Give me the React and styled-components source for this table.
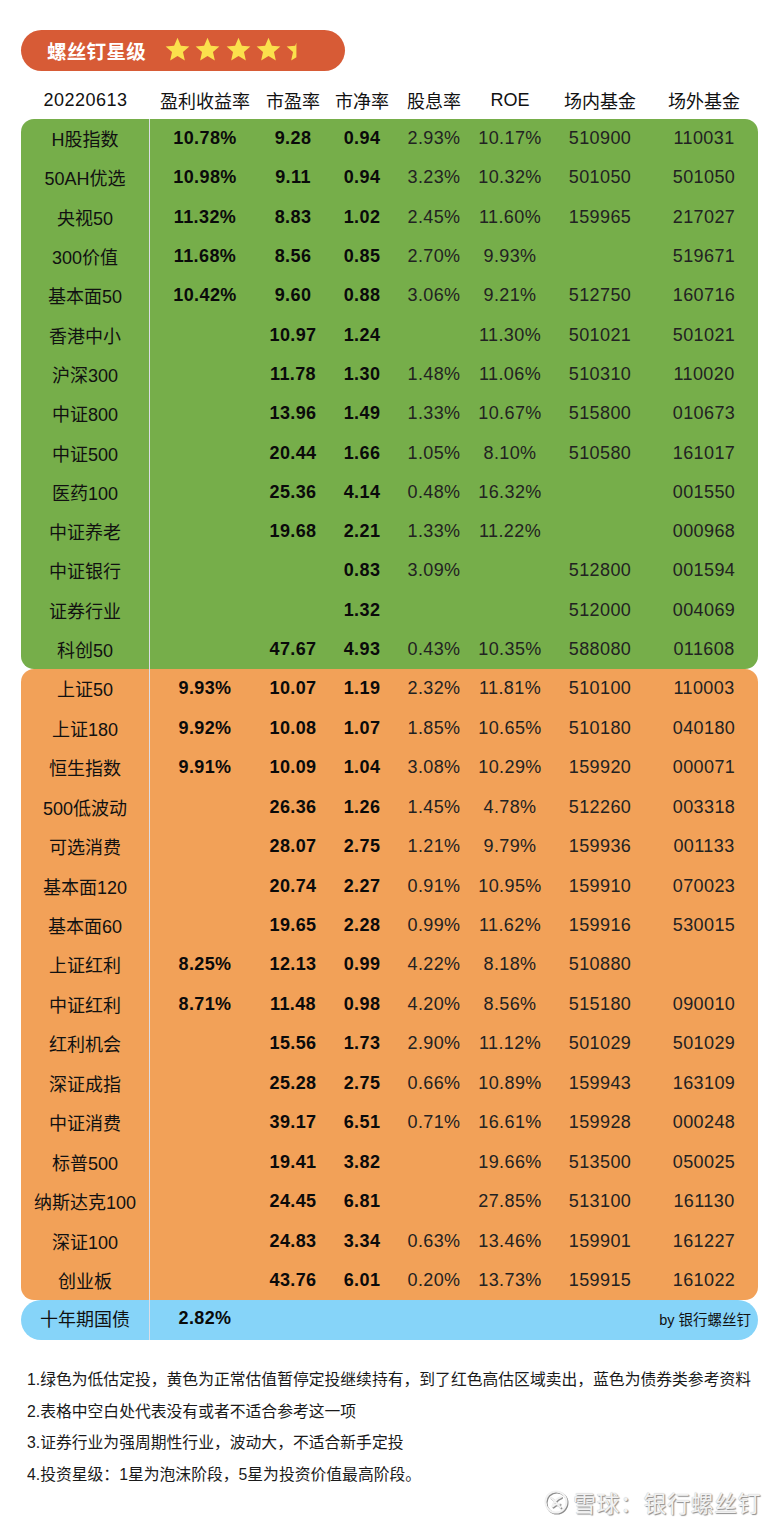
import React from "react";
import styled, { createGlobalStyle } from "styled-components";

const GlobalStyle = createGlobalStyle`
  html, body { margin: 0; padding: 0; background: #ffffff; }
  body {
    font-family: "Liberation Sans", "Noto Sans CJK SC", sans-serif;
    color: #111;
    -webkit-font-smoothing: antialiased;
  }
`;

const COLS = "129px 110px 66px 72px 72px 80px 100px 108px";

const Page = styled.div`
  position: relative;
  width: 784px;
  height: 1522px;
  box-sizing: border-box;
  padding: 30px 26px 0 21px;
  overflow: hidden;
`;

const Badge = styled.div`
  display: flex;
  align-items: center;
  width: 324px;
  height: 41px;
  box-sizing: border-box;
  padding-left: 26px;
  border-radius: 21px;
  background: #d75b36;
`;

const BadgeTitle = styled.span`
  font-family: "Noto Sans CJK SC", sans-serif;
  font-weight: 700;
  font-size: 19.5px;
  color: #ffffff;
  letter-spacing: 0.3px;
`;

const Stars = styled.div`
  display: flex;
  align-items: center;
  gap: 5.3px;
  margin-left: 19px;
  margin-top: -3px;
`;

const HeaderRow = styled.div`
  display: grid;
  grid-template-columns: ${COLS};
  height: 39px;
  margin-top: 9px;
  align-items: center;
  font-size: 18px;
  color: #111;
`;

const HeadCell = styled.div`
  text-align: center;
  white-space: nowrap;
  letter-spacing: ${(p) => (p.$num ? "0.5px" : "0")};
  padding-top: 1px;
`;

const Group = styled.div`
  background: ${(p) => p.$bg};
  border-radius: ${(p) => p.$radius || "13px"};
`;

const Row = styled.div`
  display: grid;
  grid-template-columns: ${COLS};
  height: ${(p) => p.$h}px;
  align-items: center;
`;

const NameCell = styled.div`
  height: 100%;
  display: flex;
  align-items: center;
  justify-content: center;
  border-right: 1px solid #dcdde6;
  font-size: 18px;
  color: #111;
  white-space: nowrap;
  padding-bottom: ${(p) => (p.$up ? "4px" : "1px")};
  box-sizing: border-box;
`;

const Cell = styled.div`
  text-align: center;
  font-size: 18px;
  white-space: nowrap;
  letter-spacing: 0.4px;
  font-weight: ${(p) => (p.$bold ? 700 : 400)};
  color: ${(p) => (p.$bold ? "#0a0a0a" : "#222")};
  padding-bottom: ${(p) => (p.$up ? "4px" : "0")};
`;

const ByCell = styled.div`
  grid-column: 3 / -1;
  text-align: right;
  padding-right: 7px;
  padding-bottom: 4px;
  font-size: 14.5px;
  color: #111;
`;

const Notes = styled.div`
  margin-top: 24px;
  padding-left: 6px;
  font-size: 15.8px;
  line-height: 31.5px;
  color: #1a1a1a;
`;

const NoteLine = styled.div`
  white-space: nowrap;
`;

const Watermark = styled.div`
  position: absolute;
  right: 23px;
  top: 1485px;
  display: flex;
  align-items: center;
  gap: 5px;
  font-size: 23px;
  color: #f2f2f2;
  text-shadow: 1px 1px 1px #8c8c8c, 0 0 1px #b5b5b5;
  font-family: "Noto Sans CJK SC", sans-serif;
`;

const WmText = styled.span`
  letter-spacing: 0.5px;
`;

const FULL_STAR =
  "12,0.8 15.24,8.33 23.41,9.09 17.25,14.51 19.05,22.51 12,18.32 4.95,22.51 6.75,14.51 0.59,9.09 8.76,8.33";
const HALF_STAR = "10,5.45 8.76,8.33 0.59,9.09 6.75,14.51 4.95,22.51 10,19.51";

function Star({ half }) {
  return (
    <svg width="25" height="25" viewBox="0 0 24 24">
      <polygon points={half ? HALF_STAR : FULL_STAR} fill="#fbe04c" />
    </svg>
  );
}

const green = [
  ["H股指数", "10.78%", "9.28", "0.94", "2.93%", "10.17%", "510900", "110031"],
  ["50AH优选", "10.98%", "9.11", "0.94", "3.23%", "10.32%", "501050", "501050"],
  ["央视50", "11.32%", "8.83", "1.02", "2.45%", "11.60%", "159965", "217027"],
  ["300价值", "11.68%", "8.56", "0.85", "2.70%", "9.93%", "", "519671"],
  ["基本面50", "10.42%", "9.60", "0.88", "3.06%", "9.21%", "512750", "160716"],
  ["香港中小", "", "10.97", "1.24", "", "11.30%", "501021", "501021"],
  ["沪深300", "", "11.78", "1.30", "1.48%", "11.06%", "510310", "110020"],
  ["中证800", "", "13.96", "1.49", "1.33%", "10.67%", "515800", "010673"],
  ["中证500", "", "20.44", "1.66", "1.05%", "8.10%", "510580", "161017"],
  ["医药100", "", "25.36", "4.14", "0.48%", "16.32%", "", "001550"],
  ["中证养老", "", "19.68", "2.21", "1.33%", "11.22%", "", "000968"],
  ["中证银行", "", "", "0.83", "3.09%", "", "512800", "001594"],
  ["证券行业", "", "", "1.32", "", "", "512000", "004069"],
  ["科创50", "", "47.67", "4.93", "0.43%", "10.35%", "588080", "011608"],
];

const orange = [
  ["上证50", "9.93%", "10.07", "1.19", "2.32%", "11.81%", "510100", "110003"],
  ["上证180", "9.92%", "10.08", "1.07", "1.85%", "10.65%", "510180", "040180"],
  ["恒生指数", "9.91%", "10.09", "1.04", "3.08%", "10.29%", "159920", "000071"],
  ["500低波动", "", "26.36", "1.26", "1.45%", "4.78%", "512260", "003318"],
  ["可选消费", "", "28.07", "2.75", "1.21%", "9.79%", "159936", "001133"],
  ["基本面120", "", "20.74", "2.27", "0.91%", "10.95%", "159910", "070023"],
  ["基本面60", "", "19.65", "2.28", "0.99%", "11.62%", "159916", "530015"],
  ["上证红利", "8.25%", "12.13", "0.99", "4.22%", "8.18%", "510880", ""],
  ["中证红利", "8.71%", "11.48", "0.98", "4.20%", "8.56%", "515180", "090010"],
  ["红利机会", "", "15.56", "1.73", "2.90%", "11.12%", "501029", "501029"],
  ["深证成指", "", "25.28", "2.75", "0.66%", "10.89%", "159943", "163109"],
  ["中证消费", "", "39.17", "6.51", "0.71%", "16.61%", "159928", "000248"],
  ["标普500", "", "19.41", "3.82", "", "19.66%", "513500", "050025"],
  ["纳斯达克100", "", "24.45", "6.81", "", "27.85%", "513100", "161130"],
  ["深证100", "", "24.83", "3.34", "0.63%", "13.46%", "159901", "161227"],
  ["创业板", "", "43.76", "6.01", "0.20%", "13.73%", "159915", "161022"],
];

const headers = ["20220613", "盈利收益率", "市盈率", "市净率", "股息率", "ROE", "场内基金", "场外基金"];

function DataRows({ rows, h }) {
  return rows.map((r) => (
    <Row key={r[0]} $h={h}>
      <NameCell>{r[0]}</NameCell>
      {r.slice(1).map((v, i) => (
        <Cell key={i} $bold={i < 3}>
          {v}
        </Cell>
      ))}
    </Row>
  ));
}

function XueqiuLogo() {
  return (
    <svg width="24" height="24" viewBox="0 0 24 24" style={{ filter: "drop-shadow(1px 1px 0.6px #8c8c8c)" }}>
      <circle cx="12" cy="12" r="10.5" fill="none" stroke="#f2f2f2" strokeWidth="2" />
      <path d="M6.5 7.5 C10 10, 13 14, 16.5 17.5" fill="none" stroke="#f2f2f2" strokeWidth="2" strokeLinecap="round" />
      <path d="M17 7 C13.5 8.5, 9.5 12, 8 17 C10.5 14.5, 13 13.5, 15.5 13.8" fill="none" stroke="#f2f2f2" strokeWidth="2" strokeLinecap="round" />
    </svg>
  );
}

export default function App() {
  return (
    <>
      <GlobalStyle />
      <Page>
        <Badge>
          <BadgeTitle>螺丝钉星级</BadgeTitle>
          <Stars>
            <Star />
            <Star />
            <Star />
            <Star />
            <Star half />
          </Stars>
        </Badge>

        <HeaderRow>
          {headers.map((h, i) => (
            <HeadCell key={h} $num={i === 0}>
              {h}
            </HeadCell>
          ))}
        </HeaderRow>

        <Group $bg="#76ae4a">
          <DataRows rows={green} h={39.3} />
        </Group>
        <Group $bg="#f2a158">
          <DataRows rows={orange} h={39.44} />
        </Group>
        <Group $bg="#86d4f9" $radius="20px">
          <Row $h={40}>
            <NameCell $up>十年期国债</NameCell>
            <Cell $bold $up>2.82%</Cell>
            <ByCell>by 银行螺丝钉</ByCell>
          </Row>
        </Group>

        <Notes>
          <NoteLine>1.绿色为低估定投，黄色为正常估值暂停定投继续持有，到了红色高估区域卖出，蓝色为债券类参考资料</NoteLine>
          <NoteLine>2.表格中空白处代表没有或者不适合参考这一项</NoteLine>
          <NoteLine>3.证券行业为强周期性行业，波动大，不适合新手定投</NoteLine>
          <NoteLine>4.投资星级：1星为泡沫阶段，5星为投资价值最高阶段。</NoteLine>
        </Notes>

        <Watermark>
          <XueqiuLogo />
          <WmText>雪球：银行螺丝钉</WmText>
        </Watermark>
      </Page>
    </>
  );
}
